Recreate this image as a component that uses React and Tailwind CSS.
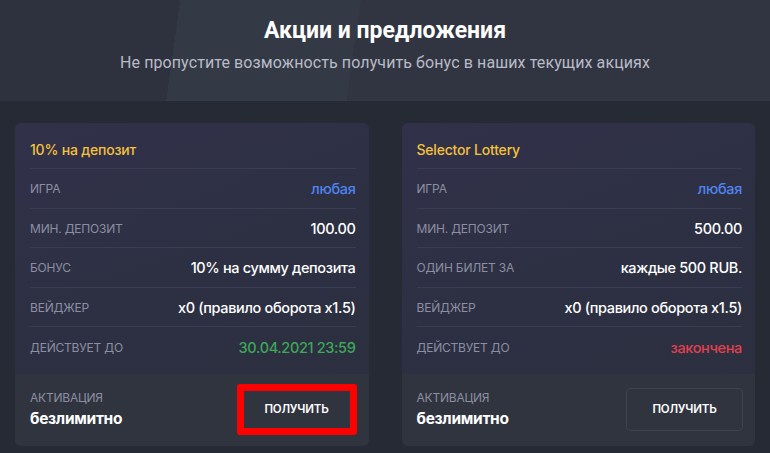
import React from "react";

const cards = [
  {
    title: "10% на депозит",
    rows: [
      ["ИГРА", "любая", "text-[#4f84f0]"],
      ["МИН. ДЕПОЗИТ", "100.00", "text-white"],
      ["БОНУС", "10% на сумму депозита", "text-white"],
      ["ВЕЙДЖЕР", "x0 (правило оборота x1.5)", "text-white"],
      ["ДЕЙСТВУЕТ ДО", "30.04.2021 23:59", "text-[#3ea758]"],
    ],
    highlight: true,
  },
  {
    title: "Selector Lottery",
    rows: [
      ["ИГРА", "любая", "text-[#4f84f0]"],
      ["МИН. ДЕПОЗИТ", "500.00", "text-white"],
      ["ОДИН БИЛЕТ ЗА", "каждые 500 RUB.", "text-white"],
      ["ВЕЙДЖЕР", "x0 (правило оборота x1.5)", "text-white"],
      ["ДЕЙСТВУЕТ ДО", "закончена", "text-[#e2404f]"],
    ],
    highlight: false,
  },
];

function Card({ c }) {
  return (
    <div className="flex-1 rounded-[6px] overflow-hidden bg-[linear-gradient(160deg,#31314a_0%,#2d3043_45%,#2b2f3e_100%)] font-['Inter',sans-serif]">
      <div className="pl-[15px] pr-[13px] pb-[7px]">
        <div className="pt-[17px] pb-[8px] leading-[20px] text-[14px] font-medium tracking-[-0.2px] text-[#f5c13c] border-b border-[#3a3d52]">
          {c.title}
        </div>
        {c.rows.map(([l, v, cls], i) => (
          <div
            key={i}
            className={`h-[39.5px] flex items-center justify-between ${i < c.rows.length - 1 ? "border-b border-[#3a3d52]" : ""}`}
          >
            <span className="text-[12px] tracking-[-0.2px] text-[#8b8fa1] translate-y-[1px]">{l}</span>
            <span className={`text-[14.5px] font-medium tracking-[-0.35px] translate-y-[1px] ${cls}`}>{v}</span>
          </div>
        ))}
      </div>
      <div className="h-[72px] bg-[#30343f] flex items-center justify-between pl-[15px] pr-[13px]">
        <div className="flex flex-col">
          <span className="text-[12px] tracking-[-0.2px] text-[#8b8fa1] leading-[18px]">АКТИВАЦИЯ</span>
          <span className="text-[15.5px] font-bold tracking-[-0.3px] text-white leading-[24px]">безлимитно</span>
        </div>
        {c.highlight ? (
          <button className="w-[120px] h-[51px] mr-[-1px] border-[7px] border-[#ff0000] rounded-[3px] bg-[#30343f] text-white text-[11.5px] font-semibold tracking-[-0.2px]">
            ПОЛУЧИТЬ
          </button>
        ) : (
          <button className="w-[115px] h-[41px] rounded-[4px] bg-[#30343f] text-white text-[11.5px] font-semibold tracking-[-0.2px] shadow-[0_0_0_1px_#3e4351]">
            ПОЛУЧИТЬ
          </button>
        )}
      </div>
    </div>
  );
}

export default function App() {
  return (
    <div className="w-[770px] h-[453px] bg-[#262a34] overflow-hidden">
      <div className="h-[101px] bg-[linear-gradient(98deg,#2e323f_0%,#2e323f_23%,#343946_23%,#343946_46%,#313542_46%,#313542_100%)] flex flex-col items-center font-['Roboto',sans-serif]">
        <h1 className="mt-[16px] text-[23px] font-bold text-white leading-[30px] tracking-[0px]">Акции и предложения</h1>
        <p className="mt-[6px] text-[16px] text-[#b9bcc6] leading-[22px] tracking-[0.1px]">
          Не пропустите возможность получить бонус в наших текущих акциях
        </p>
      </div>
      <div className="flex gap-[33px] px-[15px] pt-[22px]">
        {cards.map((c, i) => (
          <Card key={i} c={c} />
        ))}
      </div>
    </div>
  );
}
